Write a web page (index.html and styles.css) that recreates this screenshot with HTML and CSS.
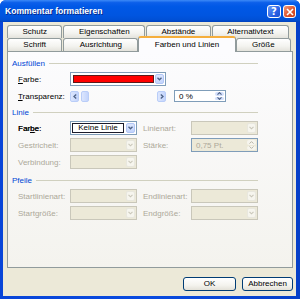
FILE: index.html
```html
<!DOCTYPE html>
<html>
<head>
<title>Kommentar formatieren</title>
<link rel="stylesheet" href="styles.css">
</head>
<body>
  <div class="window">
    <div class="titlebar">
      <span class="title">Kommentar formatieren</span>
      <span class="tb-buttons">
        <span class="tb-btn help">?</span>
        <span class="tb-btn close">
          <svg width="8" height="8" viewBox="0 0 8 8"><path d="M1 1 L7 7 M7 1 L1 7" stroke="#fff" stroke-width="1.6" /></svg>
        </span>
      </span>
    </div>

    <div class="frame">
      <div class="tabs">
        <div class="tab-row back">
          <div class="tab">Schutz</div>
          <div class="tab">Eigenschaften</div>
          <div class="tab">Abstände</div>
          <div class="tab">Alternativtext</div>
        </div>
        <div class="tab-row front">
          <div class="tab">Schrift</div>
          <div class="tab">Ausrichtung</div>
          <div class="tab active">Farben und Linien</div>
          <div class="tab">Größe</div>
        </div>
      </div>

      <div class="panel">
        <div class="group">
          <div class="group-title">Ausfüllen</div>
          <div class="row fill">
            <span class="lbl"><u>F</u>arbe:</span>
            <div class="combo">
              <span class="value"><span class="swatch"></span></span>
              <span class="arrow"><svg width="5" height="4" viewBox="0 0 5 4"><path d="M0.5 0.8 L2.5 2.8 L4.5 0.8" fill="none" stroke="#4D6185" stroke-width="1.3" /></svg></span>
            </div>
          </div>
          <div class="row fill">
            <span class="lbl"><u>T</u>ransparenz:</span>
            <div class="slider">
              <span class="sb-btn"><svg width="4" height="5" viewBox="0 0 4 5"><path d="M3.2 0.5 L1 2.5 L3.2 4.5" fill="none" stroke="#4D6185" stroke-width="1.3" /></svg></span>
              <span class="thumb"></span>
              <span class="track"></span>
              <span class="sb-btn"><svg width="4" height="5" viewBox="0 0 4 5"><path d="M0.8 0.5 L3 2.5 L0.8 4.5" fill="none" stroke="#4D6185" stroke-width="1.3" /></svg></span>
            </div>
            <span></span>
            <div class="spin small">
              <span class="value">0 %</span>
              <span class="spin-btns">
                <span><svg width="5" height="3" viewBox="0 0 5 3"><path d="M0.5 2.6 L2.5 0.6 L4.5 2.6" fill="none" stroke="#4D6185" stroke-width="1.1" /></svg></span>
                <span><svg width="5" height="3" viewBox="0 0 5 3"><path d="M0.5 0.4 L2.5 2.4 L4.5 0.4" fill="none" stroke="#4D6185" stroke-width="1.1" /></svg></span>
              </span>
            </div>
          </div>
        </div>

        <div class="group">
          <div class="group-title">Linie</div>
          <div class="row">
            <span class="lbl strong">Far<u>b</u>e:</span>
            <div class="combo">
              <span class="value"><span class="focus">Keine Linie</span></span>
              <span class="arrow"><svg width="5" height="4" viewBox="0 0 5 4"><path d="M0.5 0.8 L2.5 2.8 L4.5 0.8" fill="none" stroke="#4D6185" stroke-width="1.3" /></svg></span>
            </div>
            <span></span>
            <span class="lbl off">Linienart:</span>
            <div class="combo off">
              <span class="value"></span>
              <span class="arrow"><svg width="5" height="4" viewBox="0 0 5 4"><path d="M0.5 0.8 L2.5 2.8 L4.5 0.8" fill="none" stroke="#C9C7BA" stroke-width="1.1" /></svg></span>
            </div>
          </div>
          <div class="row">
            <span class="lbl off">Gestrichelt:</span>
            <div class="combo off">
              <span class="value"></span>
              <span class="arrow"><svg width="5" height="4" viewBox="0 0 5 4"><path d="M0.5 0.8 L2.5 2.8 L4.5 0.8" fill="none" stroke="#C9C7BA" stroke-width="1.1" /></svg></span>
            </div>
            <span></span>
            <span class="lbl off">Stärke:</span>
            <div class="spin off">
              <span class="value">0,75 Pt.</span>
              <span class="spin-btns">
                <span><svg width="5" height="3" viewBox="0 0 5 3"><path d="M0.5 2.6 L2.5 0.6 L4.5 2.6" fill="none" stroke="#B8B6A8" stroke-width="1" /></svg></span>
                <span><svg width="5" height="3" viewBox="0 0 5 3"><path d="M0.5 0.4 L2.5 2.4 L4.5 0.4" fill="none" stroke="#B8B6A8" stroke-width="1" /></svg></span>
              </span>
            </div>
          </div>
          <div class="row">
            <span class="lbl off">Verbindung:</span>
            <div class="combo off">
              <span class="value"></span>
              <span class="arrow"><svg width="5" height="4" viewBox="0 0 5 4"><path d="M0.5 0.8 L2.5 2.8 L4.5 0.8" fill="none" stroke="#C9C7BA" stroke-width="1.1" /></svg></span>
            </div>
          </div>
        </div>

        <div class="group arrows">
          <div class="group-title">Pfeile</div>
          <div class="row">
            <span class="lbl off">Startlinienart:</span>
            <div class="combo off">
              <span class="value"></span>
              <span class="arrow"><svg width="5" height="4" viewBox="0 0 5 4"><path d="M0.5 0.8 L2.5 2.8 L4.5 0.8" fill="none" stroke="#C9C7BA" stroke-width="1.1" /></svg></span>
            </div>
            <span></span>
            <span class="lbl off">Endlinienart:</span>
            <div class="combo off">
              <span class="value"></span>
              <span class="arrow"><svg width="5" height="4" viewBox="0 0 5 4"><path d="M0.5 0.8 L2.5 2.8 L4.5 0.8" fill="none" stroke="#C9C7BA" stroke-width="1.1" /></svg></span>
            </div>
          </div>
          <div class="row">
            <span class="lbl off">Startgröße:</span>
            <div class="combo off">
              <span class="value"></span>
              <span class="arrow"><svg width="5" height="4" viewBox="0 0 5 4"><path d="M0.5 0.8 L2.5 2.8 L4.5 0.8" fill="none" stroke="#C9C7BA" stroke-width="1.1" /></svg></span>
            </div>
            <span></span>
            <span class="lbl off">Endgröße:</span>
            <div class="combo off">
              <span class="value"></span>
              <span class="arrow"><svg width="5" height="4" viewBox="0 0 5 4"><path d="M0.5 0.8 L2.5 2.8 L4.5 0.8" fill="none" stroke="#C9C7BA" stroke-width="1.1" /></svg></span>
            </div>
          </div>
        </div>
      </div>

      <div class="buttons">
        <div class="btn ok">OK</div>
        <div class="btn">Abbrechen</div>
      </div>
    </div>
  </div>
</body>
</html>
```

FILE: styles.css
```css
html, body { margin: 0; padding: 0; }

body
{
    background: #ffffff;
    font-family: "Liberation Sans", Arial, sans-serif;
    font-size: 8px;
    color: #000000;
}

.window
{
    width: 300px;
    height: 299px;
    display: flex;
    flex-direction: column;
    background: linear-gradient(to right, #0845D8, #0A4BE0 50%, #0640C8);
    border-radius: 6px 6px 0 0;
    overflow: hidden;
}

/* title bar */
.titlebar
{
    flex: none;
    height: 22px;
    display: flex;
    align-items: center;
    justify-content: space-between;
    padding: 0 4px 0 5px;
    background: linear-gradient(to bottom, #3D8AF7 0%, #0C5FEA 12%, #0058E6 30%, #0055E0 70%, #0050D5 90%, #0242BC 100%);
}

.title
{
    color: #ffffff;
    font-weight: bold;
    font-size: 8.6px;
    text-shadow: 1px 1px 0 #0A2A8A;
}

.tb-buttons { display: flex; gap: 2px; margin-top: 1px; }

.tb-btn
{
    width: 14px;
    height: 13px;
    box-sizing: border-box;
    border: 1px solid #ffffff;
    border-radius: 3px;
    display: flex;
    align-items: center;
    justify-content: center;
    color: #ffffff;
    font: bold 10px "DejaVu Sans", sans-serif;
}

.help { background: linear-gradient(135deg, #6C9CF5, #2A62E6 60%, #1D4FD0); }
.close { width: 13px; background: linear-gradient(135deg, #F09A7C, #E0562E 55%, #C8401C); }

/* dialog body */
.frame
{
    flex: 1;
    display: flex;
    flex-direction: column;
    margin: 0 4px 3px 3px;
    padding: 3px 3px 0 4px;
    background: #ECE9D8;
}

.tab-row
{
    display: flex;
    height: 13px;
    align-items: flex-end;
}

.tab-row.back { margin-right: 3px; }
.tab-row.front { margin-right: 1px; }

.tab
{
    flex: 1 1 auto;
    height: 13px;
    box-sizing: border-box;
    border: 1px solid #919B9C;
    border-bottom: none;
    border-radius: 3px 3px 0 0;
    margin-right: 1px;
    background: linear-gradient(to bottom, #FFFFFF, #F3F3EF 60%, #E4E3DC);
    text-align: center;
    line-height: 12px;
    white-space: nowrap;
}

.tab.active
{
    position: relative;
    z-index: 1;
    height: 16px;
    margin: 0 0 -1px -1px;
    border-top: 2px solid #F5AE3C;
    background: #FCFCFE;
    line-height: 14px;
}

.panel
{
    flex: none;
    height: 217px;
    box-sizing: border-box;
    border: 1px solid #919B9C;
    padding: 6px 34px 0 4px;
    background: linear-gradient(to bottom, #FCFCFE, #F4F3EE);
}

.group { display: flex; flex-direction: column; gap: 3px; }
.group + .group { margin-top: 4px; }
.group.arrows { margin-top: 6px; }

.group-title
{
    display: flex;
    align-items: center;
    height: 10px;
    margin-bottom: 1px;
    color: #0046D5;
}

.group-title::after
{
    content: "";
    flex: 1;
    height: 1px;
    margin-left: 4px;
    background: #D0D0BF;
}

.row
{
    display: grid;
    grid-template-columns: 52px 67px 6px 48px 67px;
    align-items: center;
    height: 14px;
    padding-left: 6px;
}

.row.fill { grid-template-columns: 52px 96px 8px 52px; }

.lbl { white-space: nowrap; }
.lbl.off { color: #ACA899; }
.lbl.strong { text-shadow: 0.3px 0 0 #000; }

/* combo boxes */
.combo
{
    display: flex;
    height: 14px;
    box-sizing: border-box;
    border: 1px solid #7F9DB9;
    background: #ffffff;
    padding: 1px;
}

.combo .value { flex: 1; display: flex; }

.combo .arrow
{
    width: 9px;
    box-sizing: border-box;
    border: 1px solid #B1C6F6;
    border-radius: 2px;
    background: linear-gradient(to bottom, #DCE6FD, #C3D4FC);
    display: flex;
    align-items: center;
    justify-content: center;
}

.combo.off { border-color: #C9C7BA; background: #ECE9D8; }
.combo.off .arrow { border-color: #E8E7DE; background: #F6F5EE; }

.swatch
{
    flex: 1;
    margin: 1px;
    border: 1px solid #5A1A1A;
    background: #FF0000;
}

.focus
{
    width: 50px;
    border: 1px solid #1A1A2A;
    text-align: center;
    line-height: 8px;
}

/* transparency slider */
.slider
{
    display: flex;
    align-items: center;
    height: 12px;
}

.sb-btn, .thumb
{
    width: 9px;
    height: 11px;
    box-sizing: border-box;
    border: 1px solid #B9CDF8;
    border-radius: 2px;
    background: linear-gradient(to right, #DCE6FD, #C3D4FC);
    display: flex;
    align-items: center;
    justify-content: center;
}

.thumb { margin-left: 2px; width: 8px; }
.track { flex: 1; }

/* spin boxes */
.spin
{
    display: flex;
    height: 14px;
    box-sizing: border-box;
    border: 1px solid #7F9DB9;
    background: #ffffff;
    padding: 1px;
}

.spin.small { height: 12px; }

.spin .value { flex: 1; padding-left: 3px; line-height: 11px; }
.spin.small .value { line-height: 9px; }

.spin-btns
{
    width: 9px;
    display: flex;
    flex-direction: column;
    gap: 1px;
}

.spin-btns span
{
    flex: 1;
    border-radius: 2px;
    background: #D4E0FC;
    display: flex;
    align-items: center;
    justify-content: center;
}

.spin.off { background: #ECE9D8; color: #ACA899; }
.spin.off .spin-btns span { background: #F6F5EE; }

/* buttons */
.buttons
{
    display: flex;
    justify-content: flex-end;
    gap: 6px;
    margin-top: 9px;
}

.btn
{
    width: 51px;
    height: 14px;
    box-sizing: border-box;
    border: 1px solid #003C74;
    border-radius: 3px;
    background: linear-gradient(to bottom, #FFFFFF, #F4F3EE 60%, #E3E1D8);
    text-align: center;
    line-height: 12px;
}

.btn.ok { width: 53px; }
```
